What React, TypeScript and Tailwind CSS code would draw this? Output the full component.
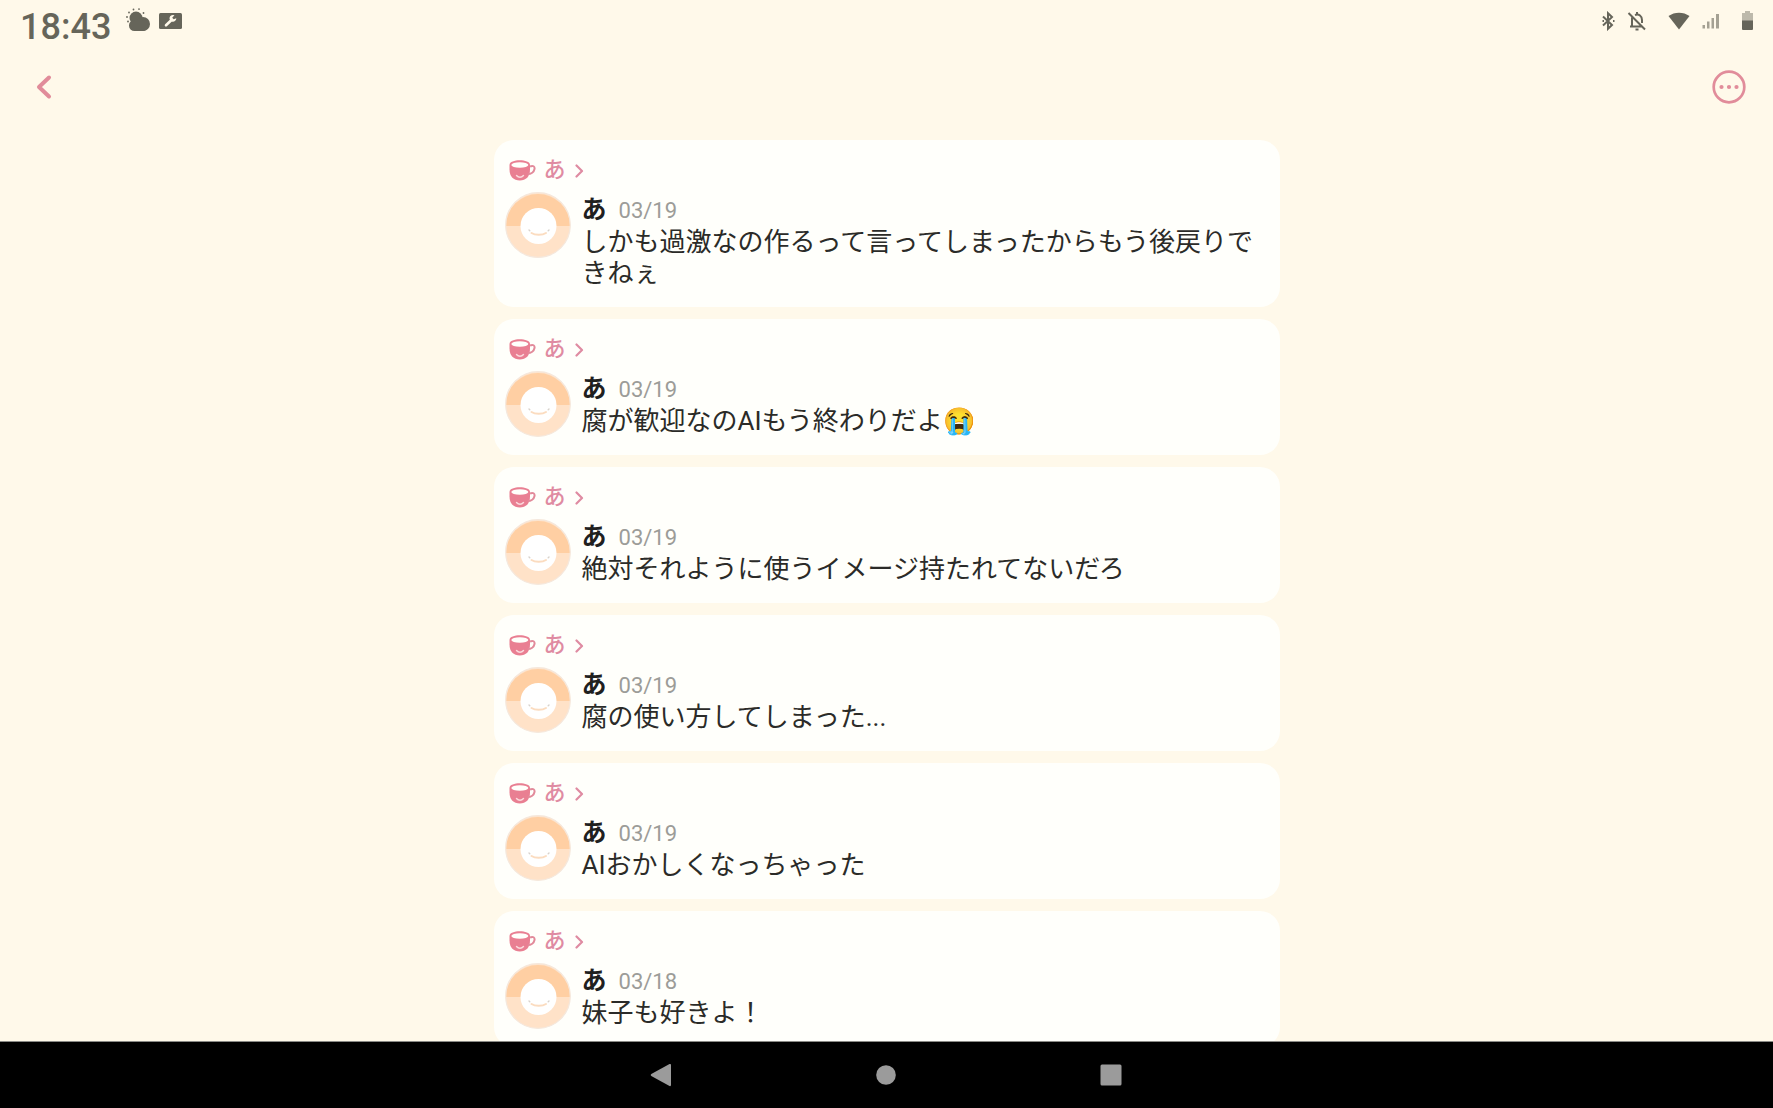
/**
 * @file App.tsx
 * @description
 * タブレット向けのタイムライン画面です。
 * ステータスバー、ヘッダー、投稿カード一覧、ナビゲーションバーで構成されます。
 */

interface Post {
  id: number;
  /** 投稿先のルーム名 */
  room: string;
  author: string;
  date: string;
  body: string;
}

const POSTS: Post[] = [
  { id: 1, room: "あ", author: "あ", date: "03/19", body: "しかも過激なの作るって言ってしまったからもう後戻りできねぇ" },
  { id: 2, room: "あ", author: "あ", date: "03/19", body: "腐が歓迎なのAIもう終わりだよ😭" },
  { id: 3, room: "あ", author: "あ", date: "03/19", body: "絶対それように使うイメージ持たれてないだろ" },
  { id: 4, room: "あ", author: "あ", date: "03/19", body: "腐の使い方してしまった..." },
  { id: 5, room: "あ", author: "あ", date: "03/19", body: "AIおかしくなっちゃった" },
  { id: 6, room: "あ", author: "あ", date: "03/18", body: "妹子も好きよ！" },
];

/** ステータスバー */
function StatusBar() {
  return (
    <div className="flex h-[52px] shrink-0 items-start justify-between px-5 text-[#66655a]">
      <div className="flex items-start">
        <time className="pt-[5px] text-[36px] leading-[44px] font-medium">18:43</time>
        <div className="ml-[14px] flex h-[42px] items-center gap-2">
          <svg width="26" height="26" viewBox="0 0 26 26" fill="currentColor" aria-hidden="true">
            <circle cx="11" cy="10" r="6.5" />
            <circle cx="18" cy="16" r="7" />
            <rect x="4" y="12" width="19" height="11" rx="5.5" />
            <circle cx="4" cy="4.500" r="0.9" />
            <circle cx="8.500" cy="1.500" r="0.9" />
            <circle cx="14" cy="1.100" r="0.9" />
            <circle cx="18.500" cy="5" r="0.9" />
            <circle cx="2" cy="9" r="0.9" />
            <circle cx="3" cy="13.500" r="0.9" />
          </svg>
          <svg width="23" height="16" viewBox="0 0 23 16" aria-hidden="true">
            <rect width="23" height="16" rx="1.5" fill="currentColor" />
            <path d="M7 12.300L12.500 7" stroke="#fff9ea" strokeWidth="2.600" strokeLinecap="round" />
            <path d="M15.500 2.300A3.400 3.400 0 1 0 17.300 5.200L14.700 6.300L13.200 4.800Z" fill="#fff9ea" />
          </svg>
        </div>
      </div>

      <div className="flex h-[42px] items-center">
        <svg width="14" height="20" viewBox="0 0 14 20" fill="none" stroke="currentColor" strokeWidth="2" aria-hidden="true">
          <path d="M2 5.500L11 14L7 17.800V2.200L11 6L2 14.500" />
          <path d="M1.500 10H3M12 10H13.500" />
        </svg>
        <svg className="ml-3" width="20" height="20" viewBox="0 0 20 20" fill="none" stroke="currentColor" strokeWidth="2" aria-hidden="true">
          <path d="M5 6.500V15M3 15.500H14.500M8 4C12 2.500 15 5 15 9V12M1.500 2L18 18.500" />
          <path d="M10 1V3.500M8.500 18.500H11.500" />
        </svg>
        <svg className="ml-[21px]" width="22" height="18" viewBox="0 0 22 18" aria-hidden="true">
          <path d="M0.500 4C6.500 -0.500 15.500 -0.500 21.500 4L11 17.500Z" fill="currentColor" />
        </svg>
        <svg className="ml-3" width="18" height="16" viewBox="0 0 18 16" fill="#a5a193" aria-hidden="true">
          <path d="M0.500 12H3V15.500H0.500ZM5 8.500H7.500V15.500H5ZM9.500 5H12V15.500H9.500ZM14 1H17V15.500H14Z" />
        </svg>
        <svg className="ml-[22px]" width="11" height="20" viewBox="0 0 11 20" aria-hidden="true">
          <path d="M3 0H8V2H11V10H0V2H3Z" fill="#bdb9ab" />
          <path d="M0 9.500H11V18Q11 19 10 19H1Q0 19 0 18Z" fill="currentColor" />
        </svg>
      </div>
    </div>
  );
}

/** 戻るボタンとメニューボタン */
function Header() {
  return (
    <header className="flex h-[70px] shrink-0 items-center justify-between px-7 text-[#e18c9a]">
      <button type="button" aria-label="戻る" className="flex size-8 items-center justify-center">
        <svg width="18" height="26" viewBox="0 0 18 26" fill="none" stroke="currentColor" strokeWidth="4" strokeLinecap="round" strokeLinejoin="round" aria-hidden="true">
          <path d="M14 3.500L4 13L14 22.500" />
        </svg>
      </button>
      <button type="button" aria-label="メニュー" className="flex size-8 items-center justify-center">
        <svg className="shrink-0" width="34" height="34" viewBox="0 0 34 34" fill="none" aria-hidden="true">
          <circle cx="17" cy="17" r="15.300" stroke="currentColor" strokeWidth="2.700" />
          <path d="M9.500 17H9.510M17 17H17.010M24.500 17H24.510" stroke="currentColor" strokeWidth="4.200" strokeLinecap="round" />
        </svg>
      </button>
    </header>
  );
}

function CupIcon() {
  return (
    <svg width="27" height="22" viewBox="0 0 27 22" fill="none" aria-hidden="true">
      <path d="M0.500 6C0.500 -0.200 21 -0.200 21 6V10.500C21 17.500 17 21.500 10.800 21.500C4.500 21.500 0.500 17.500 0.500 10.500Z" fill="#e97f92" />
      <ellipse cx="10.800" cy="6" rx="8.500" ry="2.800" fill="#fffffb" />
      <path d="M21 7.500C24 6 26 7.500 25.500 10C25 13 22 15 18.800 15" stroke="#e28a9a" strokeWidth="2" />
      <path d="M7.500 16.500C9.500 18.800 12.500 18.800 14.500 16.500" stroke="#fbd9dc" strokeWidth="1.400" strokeLinecap="round" />
    </svg>
  );
}

function Avatar() {
  return (
    <svg className="shrink-0" width="66" height="66" viewBox="0 0 66 66" fill="none" aria-hidden="true">
      <circle cx="33" cy="33" r="32.500" fill="#ffe2c8" />
      <path d="M1 34A32 32 0 0 1 65 34Z" fill="#ffcfa3" />
      <circle cx="33" cy="33" r="32.300" stroke="#f5e8dd" strokeWidth="1.200" />
      <circle cx="33.500" cy="34" r="18" fill="#ffffff" />
      <path d="M26.500 41C30 43.300 37.500 43.300 41 41" stroke="#fbdcc0" strokeWidth="2" strokeLinecap="round" />
      <path d="M24 38L24.800 38.800M44 38L43.200 38.800" stroke="#d8d2cc" strokeWidth="1.400" strokeLinecap="round" />
    </svg>
  );
}

function PostCard({ post }: { post: Post }) {
  return (
    <article className="rounded-[20px] bg-[#fffffb] pt-[14px] pr-3 pb-[18px] pl-[11px]">
      <a href="#room" className="flex h-8 w-fit items-center pl-1 text-[#df8ba2]">
        <CupIcon />
        <span className="ml-2 text-[22px] leading-8 font-medium">{post.room}</span>
        <svg className="mt-[2px] ml-[9px]" width="9" height="14" viewBox="0 0 9 14" fill="none" stroke="currentColor" strokeWidth="2.200" strokeLinecap="round" strokeLinejoin="round" aria-hidden="true">
          <path d="M1.500 1.500L7 7L1.500 12.500" />
        </svg>
      </a>
      <div className="mt-[6px] flex items-start gap-[11px]">
        <Avatar />
        <div className="min-w-0 flex-1 pt-[2px] pr-3">
          <div className="flex h-[33px] items-baseline gap-3">
            <h2 className="text-[25px] leading-8 font-bold text-[#20201e]">{post.author}</h2>
            <time className="text-[22px] leading-8 text-[#9c9c98]">{post.date}</time>
          </div>
          <p className="text-[26px] leading-[31px] text-[#2b2b28]">{post.body}</p>
        </div>
      </div>
    </article>
  );
}

/** 端末下部のナビゲーションバー */
function NavigationBar() {
  return (
    <nav className="flex h-[67px] shrink-0 items-center justify-center gap-[201px] border-t border-[#8a8a86] bg-black pr-[2px] text-[#9b9b9b]">
      <button type="button" aria-label="戻る">
        <svg width="24" height="24" viewBox="0 0 24 24" fill="currentColor" aria-hidden="true">
          <path d="M2.300 11.100L20.500 1Q22 0.500 22 2V22Q22 23.500 20.500 23L2.300 12.900Q1 12 2.300 11.100Z" />
        </svg>
      </button>
      <button type="button" aria-label="ホーム">
        <svg width="24" height="24" viewBox="0 0 24 24" fill="currentColor" aria-hidden="true">
          <circle cx="12" cy="12" r="9.800" />
        </svg>
      </button>
      <button type="button" aria-label="履歴">
        <svg width="24" height="24" viewBox="0 0 24 24" fill="currentColor" aria-hidden="true">
          <rect x="1.500" y="1.500" width="21" height="21" rx="1.500" />
        </svg>
      </button>
    </nav>
  );
}

export default function App() {
  return (
    <div className="flex h-screen flex-col overflow-hidden bg-[#fff9ea] font-[Roboto,'Noto_Sans_CJK_JP',sans-serif]" lang="ja">
      <StatusBar />
      <Header />
      <main className="min-h-0 flex-1 overflow-hidden pt-[18px]">
        <div className="mx-auto flex w-full max-w-[786px] flex-col gap-3">
          {POSTS.map((post) => (
            <PostCard key={post.id} post={post} />
          ))}
        </div>
      </main>
      <NavigationBar />
    </div>
  );
}
